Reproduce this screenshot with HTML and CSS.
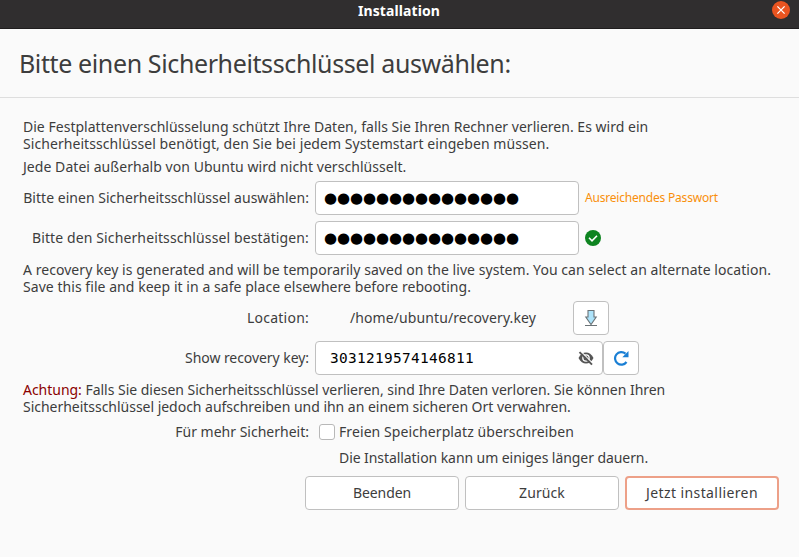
FILE: index.html
```
<!DOCTYPE html>
<html lang="de">
<head>
<meta charset="utf-8">
<title>Installation</title>
<link rel="stylesheet" href="styles.css">
</head>
<body>
<header class="titlebar">
  <span class="titlebar-text">Installation</span>
  <svg class="close" viewBox="0 0 18 18" width="18" height="18"><circle cx="9" cy="9" r="9" fill="#e95420"/><path d="M5.4 5.4l7.2 7.2M12.6 5.4l-7.2 7.2" stroke="#fff" stroke-width="1.3"/></svg>
</header>
<h1 class="heading">Bitte einen Sicherheitsschlüssel auswählen:</h1>
<main class="content">
  <p class="para"><span class="first">Die Festplattenverschlüsselung schützt Ihre Daten, falls Sie Ihren Rechner verlieren. Es wird ein</span><br><span class="second">Sicherheitsschlüssel benötigt, den Sie bei jedem Systemstart eingeben müssen.</span></p>
  <p class="para scope loose">Jede Datei außerhalb von Ubuntu wird nicht verschlüsselt.</p>
  <div class="row">
    <span class="label choose">Bitte einen Sicherheitsschlüssel auswählen:</span>
    <div class="field password">●●●●●●●●●●●●●●●</div>
    <span class="strength">Ausreichendes Passwort</span>
  </div>
  <div class="row">
    <span class="label confirm">Bitte den Sicherheitsschlüssel bestätigen:</span>
    <div class="field password">●●●●●●●●●●●●●●●</div>
    <svg class="ok" viewBox="0 0 16 16" width="16" height="16"><circle cx="8" cy="8" r="8" fill="#0e8420"/><path d="M4 7.8l3 3 5-5" fill="none" stroke="#fff" stroke-width="1.6"/></svg>
  </div>
  <p class="para recovery loose">A recovery key is generated and will be temporarily saved on the live system. You can select an alternate location.<br>Save this file and keep it in a safe place elsewhere before rebooting.</p>
  <div class="row">
    <span class="label location">Location:</span>
    <span class="path">/home/ubuntu/recovery.key</span>
    <div class="icon-button">
      <svg viewBox="0 0 16 18" width="16" height="18"><path d="M5 1.500h6v6.500h2.200L8 15.500 2.800 8H5z" fill="#ade3fa" stroke="#6b7377" stroke-width="1.1"/><path d="M2 16.500h12" stroke="#6b7377"/></svg>
    </div>
  </div>
  <div class="row">
    <span class="label tight">Show recovery key:</span>
    <div class="key-group">
      <div class="field key"><span>3031219574146811</span>
        <svg viewBox="0 0 16 16" width="16" height="16"><path d="M0.500 8C2.500 4.200 5 2.500 8 2.500s5.500 1.700 7.500 5.500C13.500 11.800 11 13.500 8 13.500S2.500 11.800.5 8z" fill="#555"/><circle cx="8" cy="8" r="3.800" fill="#fff"/><circle cx="8" cy="8" r="2.500" fill="#555"/><path d="M2.600 1.200L15 13.600" stroke="#fff" stroke-width="1.200"/><path d="M1.500 2.200L14 14.700" stroke="#555" stroke-width="1.900"/></svg>
      </div>
      <div class="icon-button">
        <svg viewBox="0 0 16 16" width="16" height="16"><path d="M12.500 3.600A6.300 6.300 0 1 0 13.500 12" fill="none" stroke="#1a7fd4" stroke-width="2.200"/><path d="M15.500 1v6.200H9.300z" fill="#1a7fd4"/></svg>
      </div>
    </div>
  </div>
  <p class="para warning"><strong class="alert">Achtung:</strong> Falls Sie diesen Sicherheitsschlüssel verlieren, sind Ihre Daten verloren. Sie können Ihren<br>Sicherheitsschlüssel jedoch aufschreiben und ihn an einem sicheren Ort verwahren.</p>
  <div class="row check-row">
    <span class="label">Für mehr Sicherheit:</span>
    <span class="checkbox"></span>
    <span class="overwrite">Freien Speicherplatz überschreiben</span>
  </div>
  <p class="para note">Die Installation kann um einiges länger dauern.</p>
</main>
<footer class="actions">
  <button class="button quit">Beenden</button>
  <button class="button back">Zurück</button>
  <button class="button install">Jetzt installieren</button>
</footer>
</body>
</html>
```
FILE: styles.css
```
* {
  box-sizing: border-box;
}

body {
  margin: 0;
  height: 557px;
  overflow: hidden;
  background: #fafafa;
  color: #3d3d3d;
  font: 14px/17px "Noto Sans", sans-serif;
  white-space: nowrap;
}

svg {
  display: block;
  flex: none;
}

.titlebar {
  display: grid;
  grid-template-columns: 1fr auto 1fr;
  height: 29px;
  padding: 1px 9px 0 8px;
  background: #302e2f;
  border-bottom: 1px solid #1f1d1e;
  color: #fff;
  font-weight: 700;
  letter-spacing: 0.09px;
}

.titlebar-text {
  grid-column: 2;
  padding-top: 1px;
}

.close {
  justify-self: end;
}

.heading {
  margin: 0;
  height: 69px;
  padding: 0 19px;
  border-bottom: 1px solid #dedede;
  font-size: 25px;
  font-weight: 400;
  line-height: 68px;
  letter-spacing: -0.38px;
}

.content {
  padding: 20px 23px 0;
}

.para {
  margin: 0;
}

.first {
  letter-spacing: 0.02px;
}

.second {
  letter-spacing: 0.065px;
}

.loose {
  letter-spacing: 0.05px;
}

.scope {
  margin-top: 6px;
}

.row {
  display: flex;
  align-items: center;
  gap: 6px;
  height: 34px;
  margin-top: 6px;
}

.label {
  flex: none;
  width: 286px;
  padding-bottom: 1px;
  text-align: right;
}

.choose {
  letter-spacing: 0.03px;
}

.confirm {
  letter-spacing: 0.12px;
}

.location {
  letter-spacing: 0.23px;
}

.tight {
  letter-spacing: -0.06px;
}

.field {
  width: 264px;
  height: 34px;
  background: #fff;
  border: 1px solid #c0c0c0;
  border-radius: 4px;
  color: #000;
}

.password {
  padding-left: 8px;
  font: 15px/33px "DejaVu Sans", sans-serif;
  letter-spacing: -0.08px;
}

.strength {
  padding-bottom: 2px;
  color: #f98f0a;
  font-size: 12px;
  letter-spacing: -0.2px;
}

.recovery {
  margin-top: 6px;
}

.path {
  width: 252px;
  padding: 0 0 1px 35px;
  letter-spacing: 0.09px;
}

.icon-button {
  display: grid;
  place-items: center;
  width: 36px;
  height: 34px;
  background: #fff;
  border: 1px solid #c0c0c0;
  border-radius: 4px;
}

.key-group {
  display: flex;
}

.key {
  display: flex;
  align-items: center;
  justify-content: space-between;
  width: 288px;
  padding: 0 8px 0 14px;
  font: 14.4px/32px "DejaVu Sans Mono", monospace;
  letter-spacing: 0.33px;
}

.warning {
  margin-top: 6px;
  letter-spacing: -0.025px;
}

.alert {
  color: #8b0000;
  font-weight: 400;
}

.check-row {
  height: 17px;
  margin-top: 8px;
}

.check-row .label {
  padding-bottom: 0;
}

.checkbox {
  width: 16px;
  height: 16px;
  margin-left: 4px;
  background: #fff;
  border: 1px solid #b8b8b8;
  border-radius: 3px;
}

.overwrite {
  margin-left: -2px;
  letter-spacing: 0.09px;
}

.note {
  margin-top: 9px;
  padding-left: 316px;
  letter-spacing: -0.07px;
}

.actions {
  display: flex;
  justify-content: flex-end;
  gap: 6px;
  padding: 10px 20px 0;
}

.button {
  width: 154px;
  height: 34px;
  padding: 0 0 2px;
  background: #fff;
  border: 1px solid #c0c0c0;
  border-radius: 4px;
  color: #3d3d3d;
  font: inherit;
}

.quit {
  letter-spacing: -0.1px;
}

.back {
  letter-spacing: 0.1px;
}

.install {
  border: 2px solid #eda088;
  letter-spacing: 0.4px;
}
```
